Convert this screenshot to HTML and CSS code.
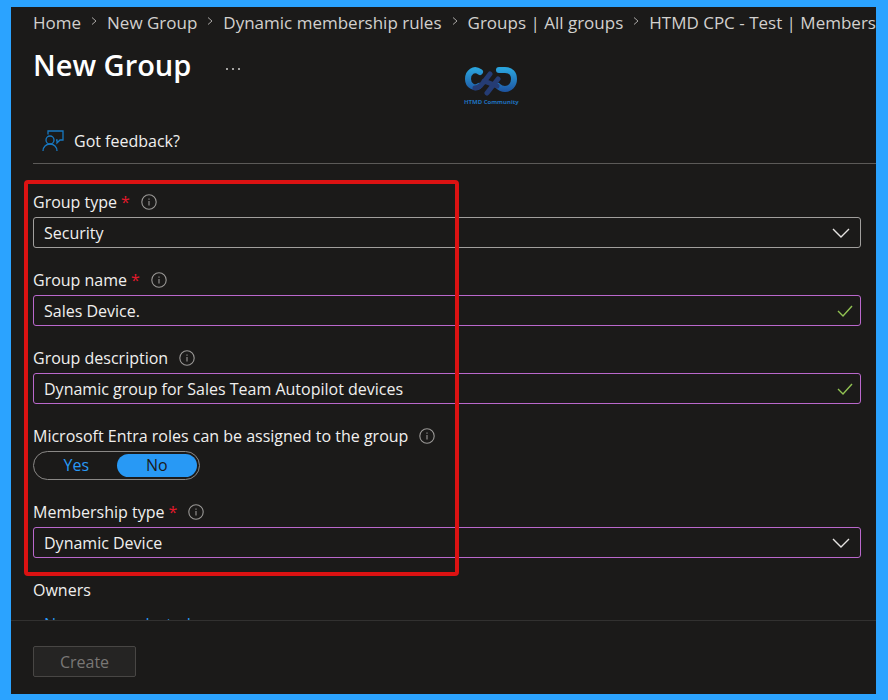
FILE: index.html
```html
<!DOCTYPE html>
<html lang="en">
<head>
<meta charset="UTF-8">
<meta name="viewport" content="width=device-width, initial-scale=1.0">
<title>New Group</title>
<link rel="stylesheet" href="styles.css">
</head>

<body>

<!-- info icon, reused next to the labels -->
<svg class="sprite" aria-hidden="true">
    <symbol id="info" viewBox="0 0 16 16">
        <circle cx="8" cy="8" r="7.2" fill="none" stroke="currentColor" stroke-width="1.1"/>
        <path d="M8 7v4.5M8 4.4v1.3" stroke="currentColor" stroke-width="1.1"/>
    </symbol>
    <symbol id="chevron" viewBox="0 0 18 10">
        <path d="M1 1l8 8 8-8" fill="none" stroke="currentColor" stroke-width="1.4"/>
    </symbol>
    <symbol id="check" viewBox="0 0 16 12">
        <path d="M1 6l5 5L15 1" fill="none" stroke="currentColor" stroke-width="1.4"/>
    </symbol>
    <symbol id="crumb" viewBox="0 0 6 8">
        <path d="M1 0.5L5 4 1 7.5" fill="none" stroke="currentColor" stroke-width="1"/>
    </symbol>
</svg>

<div class="panel">
    <nav class="breadcrumb" aria-label="Breadcrumb">
        <a href="#">Home</a>
        <svg class="sep"><use href="#crumb"/></svg>
        <a href="#">New Group</a>
        <svg class="sep"><use href="#crumb"/></svg>
        <a href="#">Dynamic membership rules</a>
        <svg class="sep"><use href="#crumb"/></svg>
        <a href="#">Groups | All groups</a>
        <svg class="sep"><use href="#crumb"/></svg>
        <a href="#">HTMD CPC - Test | Members</a>
    </nav>

    <header class="header">
        <h1>New Group</h1>
        <button class="more" type="button" aria-label="More">
            <svg width="16" height="4" viewBox="0 0 16 4" fill="currentColor"><circle cx="2" cy="2" r="1"/><circle cx="8" cy="2" r="1"/><circle cx="14" cy="2" r="1"/></svg>
        </button>
        <div class="logo">
            <svg width="54" height="30" viewBox="0 0 54 30" fill="none" stroke-linecap="round">
                <defs>
                    <linearGradient id="ring" x1="0" y1="0" x2="0" y2="30" gradientUnits="userSpaceOnUse">
                        <stop offset="0.1" stop-color="#2aa3dc"/>
                        <stop offset="0.9" stop-color="#1d4f9c"/>
                    </linearGradient>
                </defs>
                <path d="M16 6C10 1.500 4 6 4 13c0 7 7 10 11 7" stroke="url(#ring)" stroke-width="6"/>
                <path d="M35 4h6c6 0 9 4 9 9 0 6-4 10-9 10-3 0-5-1-7-3" stroke="url(#ring)" stroke-width="6"/>
                <path d="M11 22c5 0 8-5 15-14M23 27l11-14M20 15l13 5" stroke="#253c74" stroke-width="5"/>
            </svg>
            <span>HTMD Community</span>
        </div>
    </header>

    <div class="toolbar">
        <button class="feedback" type="button">
            <svg width="22" height="22" viewBox="0 0 22 22" fill="none" stroke="#1878c0" stroke-width="1.3">
                <path d="M6 4.500V1h15v9h-3l-3 3v-3h-1"/>
                <circle cx="8" cy="10" r="4"/>
                <path d="M1 21c0-4 3-7 7-7s7 3 7 7"/>
            </svg>
            Got feedback?
        </button>
    </div>

    <main class="content">
        <form class="form" id="group-form">
            <div class="field">
                <div class="label">
                    <label for="group-type">Group type</label>
                    <span class="required">*</span>
                    <svg class="info"><use href="#info"/></svg>
                </div>
                <div class="control">
                    <select id="group-type" class="plain">
                        <option>Security</option>
                        <option>Microsoft 365</option>
                    </select>
                    <svg class="chevron"><use href="#chevron"/></svg>
                </div>
            </div>

            <div class="field">
                <div class="label">
                    <label for="group-name">Group name</label>
                    <span class="required">*</span>
                    <svg class="info"><use href="#info"/></svg>
                </div>
                <div class="control">
                    <input type="text" id="group-name" value="Sales Device.">
                    <svg class="check"><use href="#check"/></svg>
                </div>
            </div>

            <div class="field">
                <div class="label">
                    <label for="group-desc">Group description</label>
                    <svg class="info"><use href="#info"/></svg>
                </div>
                <div class="control">
                    <input type="text" id="group-desc" value="Dynamic group for Sales Team Autopilot devices">
                    <svg class="check"><use href="#check"/></svg>
                </div>
            </div>

            <div class="field" role="radiogroup" aria-labelledby="roles-label">
                <div class="label">
                    <span id="roles-label">Microsoft Entra roles can be assigned to the group</span>
                    <svg class="info"><use href="#info"/></svg>
                </div>
                <div class="toggle">
                    <input type="radio" name="roles" id="roles-yes">
                    <label for="roles-yes">Yes</label>
                    <input type="radio" name="roles" id="roles-no" checked>
                    <label for="roles-no">No</label>
                </div>
            </div>

            <div class="field">
                <div class="label">
                    <label for="member-type">Membership type</label>
                    <span class="required">*</span>
                    <svg class="info"><use href="#info"/></svg>
                </div>
                <div class="control">
                    <select id="member-type">
                        <option>Dynamic Device</option>
                        <option>Dynamic User</option>
                        <option>Assigned</option>
                    </select>
                    <svg class="chevron"><use href="#chevron"/></svg>
                </div>
            </div>

            <div class="highlight"></div>
        </form>

        <div class="owners">
            <div class="label">Owners</div>
            <a href="#">No owners selected</a>
        </div>
    </main>

    <footer class="footer">
        <button class="create" type="submit" form="group-form" disabled>Create</button>
    </footer>
</div>

</body>
</html>
```
FILE: styles.css
```css
* {
    box-sizing: border-box;
}

body {
    margin: 0;
    height: 100vh;
    padding: 7px 12px 6px 11px;
    background: #2ba3ff;
    font-family: "Open Sans", "Noto Sans", sans-serif;
    font-size: 16px;
    line-height: 24px;
    color: #f0efee;
}

button, input, select {
    font: inherit;
    color: inherit;
}

.sprite {
    position: absolute;
    width: 0;
    height: 0;
}

.panel {
    height: 100%;
    display: flex;
    flex-direction: column;
    background: #1b1a19;
    overflow: hidden;
}

/* Breadcrumb */
.breadcrumb {
    display: flex;
    flex-shrink: 0;
    align-items: center;
    gap: 10px;
    height: 32px;
    padding-left: 22px;
    font-size: 17px;
    white-space: nowrap;
    overflow: hidden;
}

.breadcrumb a {
    color: #d2d0ce;
    text-decoration: none;
}

.sep {
    flex-shrink: 0;
    width: 6px;
    height: 8px;
    margin-bottom: 4px;
    color: #a8a6a4;
}

/* Title row */
.header {
    display: grid;
    grid-template-columns: auto auto 1fr;
    align-items: start;
    height: 80px;
    padding-left: 22px;
}

h1 {
    margin: 0;
    font-size: 29px;
    font-weight: 600;
    line-height: 52px;
    color: #fff;
}

.more {
    margin-left: 26px;
    padding: 0 8px;
    height: 52px;
    border: 0;
    background: none;
    color: #d2d0ce;
}

.logo {
    display: flex;
    flex-direction: column;
    align-items: center;
    width: 56px;
    margin: 27px 0 0 214px;
}

.logo span {
    font-size: 6px;
    font-weight: 700;
    line-height: 12px;
    white-space: nowrap;
    color: #1f70bc;
}

.toolbar {
    margin-left: 22px;
    height: 45px;
    border-bottom: 1px solid #5c5a58;
}

.feedback {
    display: flex;
    align-items: center;
    gap: 10px;
    height: 44px;
    padding: 0 9px;
    border: 0;
    background: none;
}

/* Form */
.content {
    flex: 1;
    min-height: 0;
    overflow: hidden;
    padding: 26px 15px 0 22px;
}

.form {
    position: relative;
    display: grid;
    gap: 20px;
}

.field {
    display: grid;
    gap: 3px;
}

.label {
    display: flex;
    align-items: center;
    height: 24px;
}

.required {
    margin-left: 4px;
    color: #e3192b;
}

.info {
    width: 16px;
    height: 16px;
    margin-left: 11px;
    color: #9a9896;
}

.control {
    display: grid;
    grid-template-columns: 1fr auto;
    align-items: center;
}

.control input,
.control select {
    grid-area: 1 / 1 / 2 / 3;
    width: 100%;
    height: 31px;
    padding: 0 40px 0 10px;
    border: 1px solid #ba68cc;
    border-radius: 3px;
    background: transparent;
    appearance: none;
    outline: 0;
}

.control select.plain {
    border-color: #a19f9d;
}

.control svg {
    grid-area: 1 / 2;
    pointer-events: none;
}

.chevron {
    width: 18px;
    height: 10px;
    margin-right: 11px;
    color: #e6e4e2;
}

.check {
    width: 16px;
    height: 12px;
    margin-right: 8px;
    color: #92c353;
}

/* Yes / No switch */
.toggle {
    display: grid;
    grid-template-columns: 1fr 1fr;
    width: 167px;
    height: 29px;
    padding: 2px;
    border: 1px solid #8a8886;
    border-radius: 15px;
}

.toggle input {
    position: absolute;
    opacity: 0;
}

.toggle label {
    line-height: 23px;
    border-radius: 12px;
    text-align: center;
    color: #2899f5;
}

.toggle input:checked + label {
    background: #2899f5;
    color: #1b1a19;
}

/* Red frame over the filled-in fields */
.highlight {
    position: absolute;
    top: -10px;
    bottom: -18px;
    left: -9px;
    width: 435px;
    border: 4px solid #dc1212;
    border-radius: 4px;
    pointer-events: none;
}

.owners {
    margin-top: 20px;
}

.owners a {
    display: block;
    margin: 10px 0 0 11px;
    color: #2899f5;
    text-decoration: none;
}

/* Bottom bar */
.footer {
    flex-shrink: 0;
    height: 74px;
    padding: 25px 22px 0;
    border-top: 1px solid #323130;
}

.create {
    width: 103px;
    height: 31px;
    border: 1px solid #484644;
    border-radius: 2px;
    background: #252423;
    color: #797775;
}
```
